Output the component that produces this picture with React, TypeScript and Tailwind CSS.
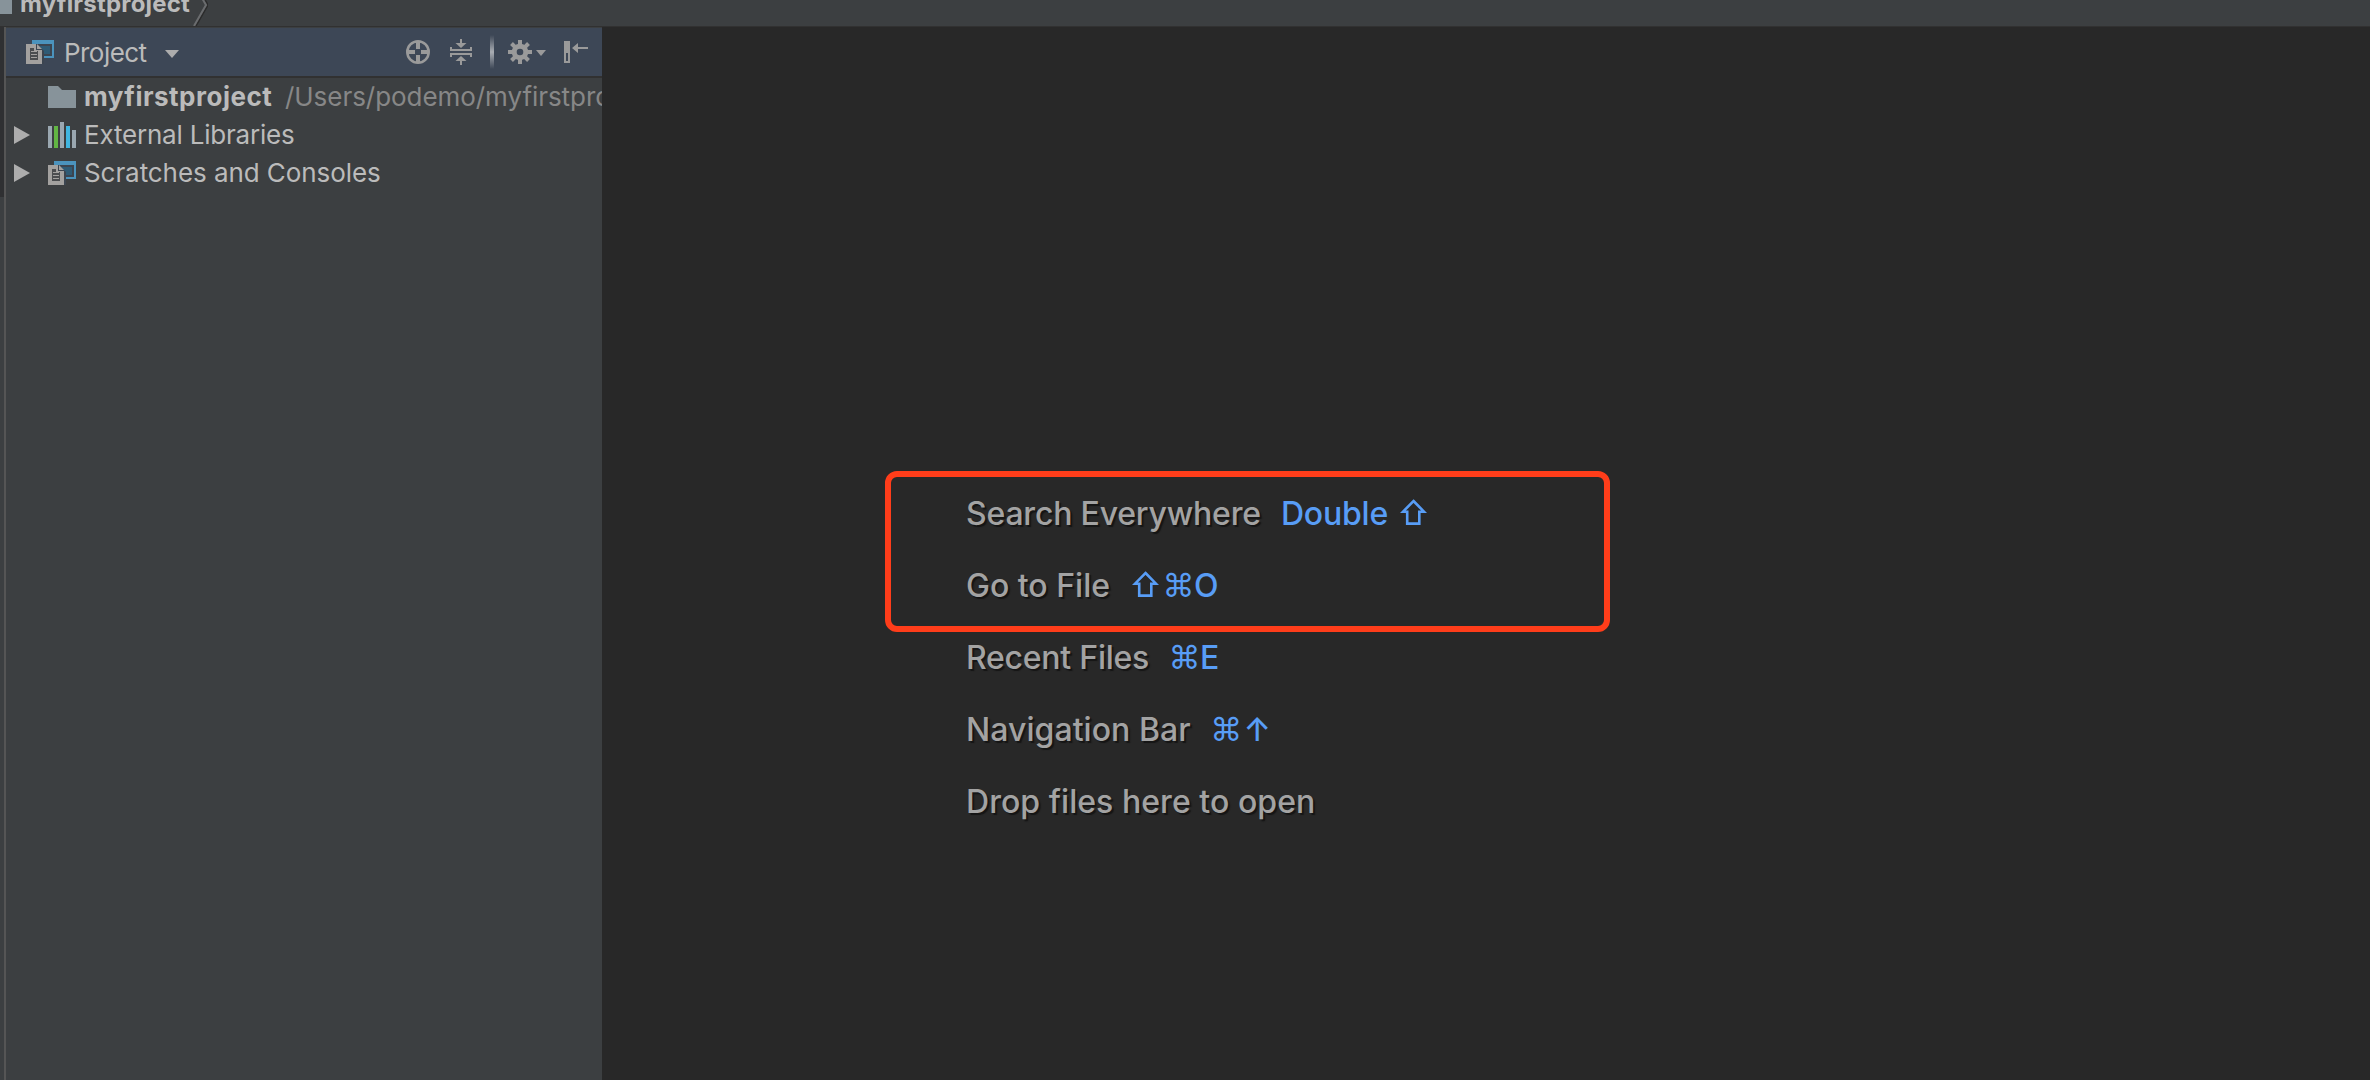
import type { ReactNode } from "react";

const ScratchIcon = () => (
  <svg className="block h-6 w-7 shrink-0" viewBox="0 0 28 24">
    <path d="M6 0h22v18H6z" fill="#4b93bd" />
    <path d="M8 4h18v12H8z" fill="#3c4550" />
    <path d="M10 6h14v8H10z" fill="#2f5b75" />
    <path d="M0 4h11l7 7v13H0z" fill="#3c4550" />
    <path d="M0 4h10v6h6v14H0z" fill="#a3a19f" />
    <path d="M11 4l5 5h-5z" fill="#a3a19f" />
    <path d="M4 8h4v3h4v9H4z" fill="#4b4d4f" />
    <path d="M5 11.5h6M5 14.5h6M5 17.5h6" stroke="#a3a19f" strokeWidth="1" />
  </svg>
);

const FolderIcon = () => (
  <svg className="block h-[22px] w-7 shrink-0" viewBox="0 0 28 22">
    <path d="M0 0h10l4 4h14v18H0z" fill="#87939a" />
  </svg>
);

const LibraryIcon = () => (
  <svg className="block h-[26px] w-7 shrink-0" viewBox="0 0 28 26">
    <path d="M0 4h4v22H0zM12 0h4v26h-4zM24 8h4v18h-4z" fill="#9aa7b0" />
    <path d="M6 4h4v22H6z" fill="#62b543" />
    <path d="M18 4h4v22h-4z" fill="#40b6e0" />
  </svg>
);

const Arrow = () => (
  <svg className="block h-[18px] w-4 shrink-0" viewBox="0 0 16 18">
    <path d="M0 0l16 9-16 9z" fill="#adadad" />
  </svg>
);

const TargetIcon = () => (
  <svg className="block size-6" viewBox="0 0 24 24" fill="none" stroke="#9a9a9a">
    <circle cx="12" cy="12" r="10.7" strokeWidth="2.6" />
    <path d="M12 2v7M12 15v7M2 12h7M15 12h7" strokeWidth="4" />
  </svg>
);

const CollapseIcon = () => (
  <svg className="block h-[26px] w-[22px]" viewBox="0 0 22 26" fill="#9a9a9a">
    <path d="M10 0h2v4h4.500l-5.500 5-5.500-5H10zM10 26h2v-4h4.500l-5.500-5-5.500 5H10z" />
    <path d="M0 8h2v2h18V8h2v4H0zM0 14h22v4h-2v-2H2v2H0z" />
  </svg>
);

const GearIcon = () => (
  <svg className="block size-6" viewBox="0 0 24 24" fill="none" stroke="#9a9a9a">
    <circle cx="12" cy="12" r="5.800" strokeWidth="5" />
    <path
      d="M12 0v5M12 19v5M0 12h5M19 12h5M3.500 3.500l3.500 3.500M17 17l3.500 3.500M3.500 20.500L7 17M17 7l3.500-3.500"
      strokeWidth="4"
    />
  </svg>
);

const HideIcon = () => (
  <svg className="block h-[22px] w-6" viewBox="0 0 24 22" fill="#9a9a9a">
    <path fillRule="evenodd" d="M0 0h6v22H0zM2 12v8h2v-8z" />
    <path d="M8 7l6-5v4h10v2H14v4z" />
  </svg>
);

type RowProps = { arrow?: boolean; icon: ReactNode; children: ReactNode };

const TreeRow = ({ arrow, icon, children }: RowProps) => (
  <div className="flex h-[38px] items-center whitespace-nowrap">
    <div className="ml-2 w-[34px] shrink-0">{arrow && <Arrow />}</div>
    {icon}
    <div className="ml-2 flex">{children}</div>
  </div>
);

const Sidebar = () => (
  <aside className="flex w-[602px] shrink-0 overflow-hidden bg-[#3c3f41]">
    <div className="w-1 shrink-0">
      <div className="h-[170px] bg-[#2f3032]" />
    </div>
    <div className="w-0.5 shrink-0 bg-[#555555]" />
    <div className="min-w-0 flex-1 overflow-hidden">
      <div className="mt-px flex h-[50px] items-center border-b-2 border-[#313131] bg-[#3d4756] pl-5">
        <ScratchIcon />
        <span className="mt-0.5 ml-2.5 w-[83px] text-[26px] leading-none font-[430] tracking-[-0.55px]">Project</span>
        <svg className="mt-1 ml-[18px] h-2 w-3.5" viewBox="0 0 14 8">
          <path d="M0 0h14L7 8z" fill="#adadad" />
        </svg>
        <div className="mr-3.5 ml-auto flex items-center">
          <TargetIcon />
          <div className="ml-5">
            <CollapseIcon />
          </div>
          <div className="ml-[18px] h-[34px] w-1 bg-linear-to-b from-transparent via-[#a9adb3] to-transparent" />
          <div className="ml-3.5">
            <GearIcon />
          </div>
          <svg className="mt-0.5 ml-1 h-1.5 w-2.5" viewBox="0 0 10 6">
            <path d="M0 0h10L5 6z" fill="#9a9a9a" />
          </svg>
          <div className="ml-[18px]">
            <HideIcon />
          </div>
        </div>
      </div>
      <div className="text-[26px] leading-none font-[430]">
        <TreeRow icon={<FolderIcon />}>
          <span className="w-[201px] font-bold tracking-[0.5px]">myfirstproject</span>
          <span className="tracking-[-0.05px] text-[#878787]">/Users/podemo/myfirstproject</span>
        </TreeRow>
        <TreeRow arrow icon={<LibraryIcon />}>
          <span className="tracking-[-0.2px]">External Libraries</span>
        </TreeRow>
        <TreeRow arrow icon={<ScratchIcon />}>
          <span className="tracking-[-0.07px]">Scratches and Consoles</span>
        </TreeRow>
      </div>
    </div>
  </aside>
);

const Keys = ({ children }: { children: ReactNode }) => (
  <span className="flex items-center text-[#589df6] text-shadow-none">{children}</span>
);

const Shift = () => (
  <svg className="mx-0.5 mb-[5px] block h-[26px] w-[27px]" viewBox="0 0 27 26" fill="none">
    <path d="M13.500 2L24 12.700h-4.700v11.900H7.200V12.700H3z" stroke="currentColor" strokeWidth="2.600" />
  </svg>
);

const Cmd = () => <span className="flex w-[31px] justify-center font-['DejaVu_Sans'] text-[32px]">⌘</span>;

const Hint = ({ label, children }: { label: ReactNode; children?: ReactNode }) => (
  <div className="flex h-[72px] items-center gap-5 whitespace-nowrap">
    {label}
    {children}
  </div>
);

export default function App() {
  return (
    <div className="flex h-[1080px] w-[2370px] flex-col overflow-hidden bg-[#282828] font-['Inter',sans-serif] text-[#bbbbbb]">
      {/* navigation bar */}
      <div className="flex h-[26px] shrink-0 items-start overflow-hidden bg-[#3c3f41]">
        <div className="h-3.5 w-3 bg-[#87939a]" />
        <span className="-mt-[9px] ml-2 w-[170px] text-2xl leading-[26px] font-bold tracking-[0.2px]">
          myfirstproject
        </span>
        <svg className="ml-0.5 h-[26px] w-4" viewBox="0 0 16 26" fill="none">
          <path d="M4 26L16 5 12-2" stroke="#2b2b2b" strokeWidth="1.500" />
          <path d="M2 26L14 5 10-2" stroke="#6a6c6e" strokeWidth="2" />
        </svg>
      </div>
      <div className="flex min-h-0 flex-1 border-t border-[#313131]">
        <Sidebar />
        <main className="relative flex-1 pt-[451px] pl-[364px] text-[32px] leading-none font-[450] text-[#a3a3a3] text-shadow-[2px_2px_1px_#151515]">
          <Hint label={<span className="tracking-[-0.2px]">Search Everywhere</span>}>
            <Keys>
              <span className="mr-2.5 tracking-[-0.2px]">Double</span>
              <Shift />
            </Keys>
          </Hint>
          <Hint label={<span>Go to File</span>}>
            <Keys>
              <Shift />
              <div className="ml-0.5">
                <Cmd />
              </div>
              <span>O</span>
            </Keys>
          </Hint>
          <Hint label={<span className="tracking-[-0.25px]">Recent Files</span>}>
            <Keys>
              <Cmd />
              <span>E</span>
            </Keys>
          </Hint>
          <Hint label={<span className="tracking-[0.05px]">Navigation Bar</span>}>
            <Keys>
              <Cmd />
              <span className="w-[31px] text-center">↑</span>
            </Keys>
          </Hint>
          <Hint label={<span className="tracking-[0.05px]">Drop files here to open</span>} />
          {/* highlight frame over the first two hints */}
          <div className="absolute top-[444px] left-[283px] h-[161px] w-[725px] rounded-xl border-6 border-[#ff3d1a]" />
        </main>
      </div>
    </div>
  );
}
